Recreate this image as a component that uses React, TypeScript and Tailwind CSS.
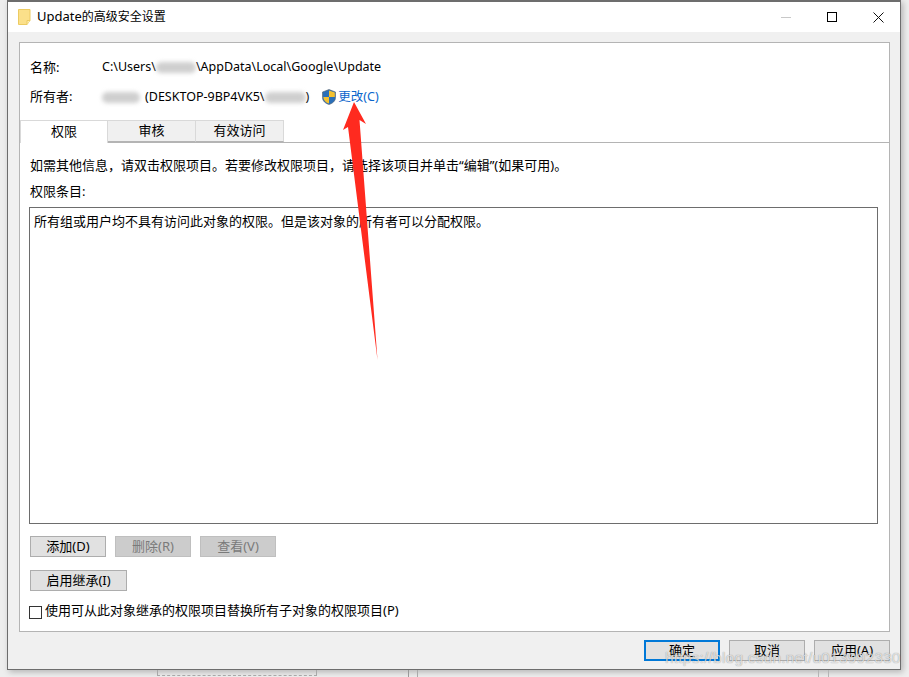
import React from "react";

const font = "[font-family:'Noto_Sans','Noto_Sans_CJK_SC',sans-serif]";

function Btn({ label, wide, disabled, primary }: { label: string; wide?: boolean; disabled?: boolean; primary?: boolean }) {
    let cls = "border border-[#adadad] bg-[#e1e1e1] text-black";
    if (disabled) cls = "border border-[#bfbfbf] bg-[#cccccc] text-[#7a7a7a]";
    if (primary) cls = "border-2 border-[#0078d7] bg-[#e1e1e1] text-black";
    return (
        <div className={`flex h-[21px] items-center justify-center text-[13px] ${wide ? "w-[97px]" : "w-[76px]"} ${cls}`}>
            {label}
        </div>
    );
}

function Tab({ label, active }: { label: string; active?: boolean }) {
    return (
        <div
            className={`flex w-[88px] items-center justify-center border-t border-r border-[#d9d9d9] text-[13px] ${
                active ? "h-[23px] border-l bg-white" : "h-[22px] border-b border-b-[#b4b4b4] bg-[#f0f0f0]"
            }`}
        >
            {label}
        </div>
    );
}

function Smudge({ w }: { w: string }) {
    return <span className={`inline-block h-[11px] rounded-full bg-[#cfcfcf] blur-[2px] align-middle ${w}`} />;
}

const hint = "如需其他信息\uFF0C请双击权限项目。若要修改权限项目\uFF0C请选择该项目并单击“编辑”(如果可用)。";

export default function App() {
    return (
        <div className={`relative h-[677px] w-[909px] overflow-hidden bg-[#eeeeee] pl-[7px] text-black ${font}`}>
            <div className="h-[670px] w-[894px] border border-t-2 border-[#6d6d6d] bg-[#f0f0f0] shadow-[2px_2px_6px_rgba(0,0,0,0.25)]">
                {/* title bar */}
                <div className="flex h-[30px] items-center bg-white pl-[10px]">
                    <svg width="13" height="16" viewBox="0 0 13 16" className="mr-[6px]">
                        <path d="M.5.5h11.500v11l-3 4H.5z" fill="#fbe08a" stroke="#eccb62" strokeWidth="1" />
                        <path d="M9 15.500V11.500h3" fill="#fdeeb4" stroke="#eccb62" />
                    </svg>
                    <span className="text-[12px]">
                        <span className="text-[13px]">Update</span>的高级安全设置
                    </span>
                    <div className="ml-auto flex items-center gap-[36px] pr-[16px]">
                        <div className="h-px w-[10px] bg-[#c8c8c8]" />
                        <div className="h-[10px] w-[10px] border border-black" />
                        <svg width="11" height="11" viewBox="0 0 11 11">
                            <path d="M.5.5l10 10M10.5.5l-10 10" stroke="#111" strokeWidth="1" />
                        </svg>
                    </div>
                </div>

                {/* main panel */}
                <div className="ml-[11px] mr-[10px] mt-[10px] h-[590px] border border-[#b4b4b4] bg-white">
                    <div className="mt-[13px] flex h-[20px] items-center pl-[10px] pt-[3px] text-[12.5px]">
                        <span className="w-[72px] text-[13px]">名称:</span>
                        <span>C:\Users\</span>
                        <Smudge w="w-[40px]" />
                        <span>\AppData\Local\Google\Update</span>
                    </div>
                    <div className="mt-[11px] flex h-[20px] items-center pl-[10px] text-[12.5px]">
                        <span className="w-[72px] text-[13px]">所有者:</span>
                        <Smudge w="w-[38px]" />
                        <span className="ml-[5px]">(DESKTOP-9BP4VK5\</span>
                        <Smudge w="w-[41px]" />
                        <span>)</span>
                        <svg width="16" height="16" viewBox="0 0 16 16" className="ml-[12px]">
                            <path d="M8 .5L14.5 3v5.5c0 3.5-3 6-6.5 7-3.500-1-6.500-3.500-6.500-7V3z" fill="#2a6fb8" stroke="#56606b" strokeWidth=".6" />
                            <path d="M8 1.500V8h5.800V3.400zM8 8v6.600C5 13.700 2.500 11.500 2.300 8z" fill="#f5c12e" />
                        </svg>
                        <span className="ml-[1px] text-[12.5px] text-[#0a66cc]">更改(C)</span>
                    </div>

                    {/* tabs */}
                    <div className="mt-[13px] flex items-start">
                        <Tab label="权限" active />
                        <Tab label="审核" />
                        <Tab label="有效访问" />
                    </div>
                    <div className="-mt-px ml-[88px] h-px bg-[#b4b4b4]" />

                    <div className="pl-[9px] pr-[11px]">
                        <p className="mt-[13px] pl-px text-[13px] leading-[18px]">{hint}</p>
                        <p className="mt-[8px] pl-px text-[13px] leading-[18px]">权限条目:</p>
                        <div className="mt-[7px] h-[317px] border border-[#6d6d6d] px-[4px] pt-[4px] text-[13px] leading-[18px]">
                            所有组或用户均不具有访问此对象的权限。但是该对象的所有者可以分配权限。
                        </div>
                        <div className="ml-px mt-[12px] flex gap-[9px]">
                            <Btn label="添加(D)" />
                            <Btn label="删除(R)" disabled />
                            <Btn label="查看(V)" disabled />
                        </div>
                        <div className="ml-px mt-[13px]">
                            <Btn label="启用继承(I)" wide />
                        </div>
                        <div className="mt-[11px] flex h-[18px] items-center text-[13px]">
                            <div className="mr-[3px] mt-[2px] h-[13px] w-[13px] border border-[#333333] bg-white" />
                            使用可从此对象继承的权限项目替换所有子对象的权限项目(P)
                        </div>
                    </div>
                </div>

                {/* footer buttons */}
                <div className="mr-[10px] mt-[8px] flex justify-end gap-[9px]">
                    <Btn label="确定" primary />
                    <Btn label="取消" />
                    <Btn label="应用(A)" />
                </div>
            </div>

            {/* stuff peeking out from the window behind */}
            <div className="absolute left-[157px] top-[670px] h-[6px] w-[160px] border-x border-b border-dashed border-[#a8a8a8]" />
            <div className="absolute left-[408px] top-[670px] h-[7px] w-px bg-[#999999]" />
            <div className="absolute left-[417px] top-[670px] h-[7px] w-px bg-[#aaaaaa]" />
            <div className="absolute left-[818px] top-[670px] h-[7px] w-px bg-[#b5b5b5]" />
            <div className="absolute left-[828px] top-[670px] h-[7px] w-px bg-[#b5b5b5]" />

            {/* red arrow annotation */}
            <svg className="absolute left-[340px] top-[100px]" width="42" height="262" viewBox="0 0 42 262">
                <path d="M14 2L26 24 19.500 20 37.500 260 8 27 3 30z" fill="#ff2a1f" />
            </svg>

            {/* blog watermark */}
            <span className="absolute left-[665px] top-[646px] text-[15.5px] tracking-[0.2px] text-white/70 [font-family:'Liberation_Sans',sans-serif] [text-shadow:0_0_1px_rgba(0,0,0,0.45)]">
                https://blog.csdn.net/u013992330
            </span>
        </div>
    );
}
